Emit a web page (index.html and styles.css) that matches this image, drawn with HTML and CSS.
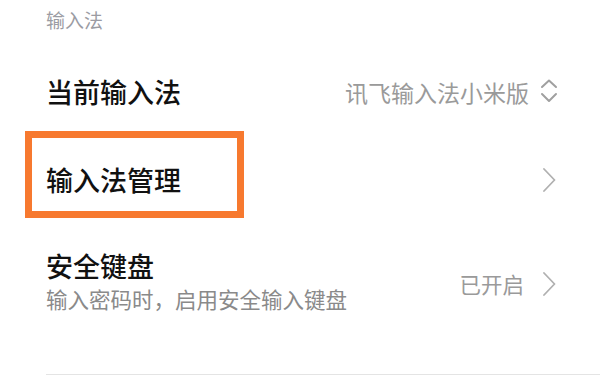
FILE: index.html
```html
<!DOCTYPE html>
<html lang="zh-CN">
  <head>
    <meta charset="UTF-8" />
    <meta name="viewport" content="width=device-width, initial-scale=1.0" />
    <title>输入法</title>
    <link rel="stylesheet" href="styles.css">
  </head>
  <body>
    <div class="settings">
      <div class="group-title">输入法</div>

      <div class="row row-current">
        <div class="row-main">
          <div class="row-title">当前输入法</div>
        </div>
        <div class="row-value">讯飞输入法小米版</div>
        <div class="row-icon">
          <svg viewBox="0 0 20 26" width="20" height="26">
            <polyline points="3,8 10,1.5 17,8" fill="none" stroke="#a0a0a0" stroke-width="2" stroke-linecap="round" stroke-linejoin="round" />
            <polyline points="3,15 10,22 17,15" fill="none" stroke="#a0a0a0" stroke-width="2" stroke-linecap="round" stroke-linejoin="round" />
          </svg>
        </div>
      </div>

      <div class="row row-manage">
        <div class="row-main">
          <div class="row-title">输入法管理</div>
        </div>
        <div class="row-icon">
          <svg viewBox="0 0 20 24" width="20" height="24">
            <polyline points="5,1 15.5,12 5,23" fill="none" stroke="#b0b0b0" stroke-width="1.8" stroke-linecap="round" stroke-linejoin="round" />
          </svg>
        </div>
        <div class="highlight"></div>
      </div>

      <div class="row row-secure">
        <div class="row-main">
          <div class="row-title">安全键盘</div>
          <div class="row-desc">输入密码时，启用安全输入键盘</div>
        </div>
        <div class="row-value">已开启</div>
        <div class="row-icon">
          <svg viewBox="0 0 20 24" width="20" height="24">
            <polyline points="5,1 15.5,12 5,23" fill="none" stroke="#b0b0b0" stroke-width="1.8" stroke-linecap="round" stroke-linejoin="round" />
          </svg>
        </div>
      </div>

      <div class="divider"></div>
    </div>
  </body>
</html>
```

FILE: styles.css
```css
body {
  margin: 0;
  background: #fff;
  font-family: "Noto Sans CJK SC", "Noto Sans", sans-serif;
}

.settings {
  padding: 0 41px 0 46px;
}

.group-title {
  height: 50px;
  padding-top: 5px;
  box-sizing: border-box;
  font-size: 19px;
  line-height: 29px;
  color: #9b9ca3;
}

.row {
  display: flex;
  align-items: center;
  gap: 10px;
  position: relative;
}

.row-current {
  height: 84px;
}

.row-manage {
  height: 92px;
}

.row-secure {
  height: 116px;
}

.row-main {
  flex: 1;
  display: flex;
  flex-direction: column;
}

.row-secure .row-main {
  margin-bottom: 6px;
}

.row-title {
  font-size: 27px;
  line-height: 36px;
  font-weight: 500;
  color: #111;
}

.row-desc {
  font-size: 21.5px;
  line-height: 30px;
  color: #8a8a8a;
}

.row-value {
  font-size: 23px;
  line-height: 30px;
  color: #9a9a9a;
}

.row-secure .row-value {
  font-size: 21.5px;
  margin-right: 5px;
}

.row-icon {
  width: 20px;
  display: flex;
  justify-content: center;
}

.row-manage .highlight {
  position: absolute;
  left: -21px;
  top: -3px;
  width: 219px;
  height: 87px;
  border: 7px solid #f7792f;
  box-sizing: border-box;
}

.divider {
  height: 1px;
  margin-top: 32px;
  margin-right: -41px;
  background: #e4e4e4;
}
```
